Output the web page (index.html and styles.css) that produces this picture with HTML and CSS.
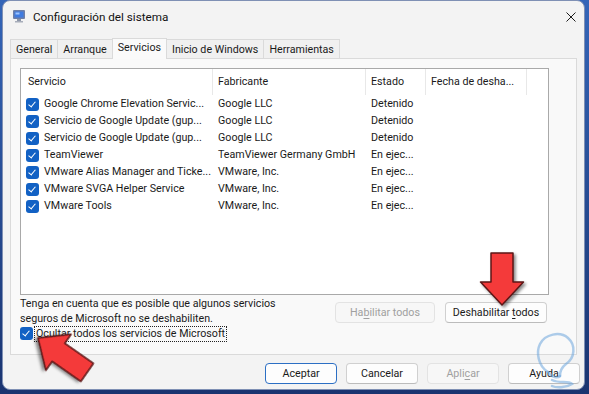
FILE: index.html
```html
<!DOCTYPE html>
<html lang="es">
<head>
  <meta charset="UTF-8">
  <title>Configuración del sistema</title>
  <link rel="stylesheet" href="styles.css">
</head>
<body>

  <div class="window">
    <!-- Title bar -->
    <div class="titlebar">
      <svg class="app-icon" width="14" height="14" viewBox="0 0 14 14">
        <rect x="1" y="1" width="12" height="9" rx="1" fill="#6d7fa8"/>
        <rect x="2.5" y="2.5" width="9" height="6" fill="#3f7be0"/>
        <rect x="3.5" y="3.5" width="4" height="2" fill="#9cc4ff"/>
        <rect x="5" y="10" width="4" height="2" fill="#8d96a8"/>
        <rect x="3" y="12" width="8" height="1.5" fill="#a7adba"/>
      </svg>
      <span class="title">Configuración del sistema</span>
      <svg class="close" width="10" height="10" viewBox="0 0 10 10">
        <path d="M0.5 0.5 L9.5 9.5 M9.5 0.5 L0.5 9.5" stroke="#1b1b1b" stroke-width="1"/>
      </svg>
    </div>

    <!-- Tabs -->
    <div class="tabs">
      <div class="tab">General</div>
      <div class="tab">Arranque</div>
      <div class="tab selected">Servicios</div>
      <div class="tab">Inicio de Windows</div>
      <div class="tab">Herramientas</div>
    </div>

    <div class="panel">
      <!-- Services list -->
      <div class="list">
        <div class="list-head">
          <div class="col">Servicio</div>
          <div class="col">Fabricante</div>
          <div class="col">Estado</div>
          <div class="col">Fecha de desha...</div>
          <div class="col last"></div>
        </div>

        <div class="row">
          <div class="cell name"><span class="check"></span>Google Chrome Elevation Servic...</div>
          <div class="cell">Google LLC</div>
          <div class="cell">Detenido</div>
        </div>
        <div class="row">
          <div class="cell name"><span class="check"></span>Servicio de Google Update (gup...</div>
          <div class="cell">Google LLC</div>
          <div class="cell">Detenido</div>
        </div>
        <div class="row">
          <div class="cell name"><span class="check"></span>Servicio de Google Update (gup...</div>
          <div class="cell">Google LLC</div>
          <div class="cell">Detenido</div>
        </div>
        <div class="row">
          <div class="cell name"><span class="check"></span>TeamViewer</div>
          <div class="cell">TeamViewer Germany GmbH</div>
          <div class="cell">En ejec...</div>
        </div>
        <div class="row">
          <div class="cell name"><span class="check"></span>VMware Alias Manager and Ticke...</div>
          <div class="cell">VMware, Inc.</div>
          <div class="cell">En ejec...</div>
        </div>
        <div class="row">
          <div class="cell name"><span class="check"></span>VMware SVGA Helper Service</div>
          <div class="cell">VMware, Inc.</div>
          <div class="cell">En ejec...</div>
        </div>
        <div class="row">
          <div class="cell name"><span class="check"></span>VMware Tools</div>
          <div class="cell">VMware, Inc.</div>
          <div class="cell">En ejec...</div>
        </div>
      </div>

      <!-- Note and list buttons -->
      <div class="list-footer">
        <p class="note">Tenga en cuenta que es posible que algunos servicios<br>seguros de Microsoft no se deshabiliten.</p>
        <div class="list-buttons">
          <button class="btn disabled wide">Ha<u>b</u>ilitar todos</button>
          <button class="btn wide2">Deshabilitar <u>t</u>odos</button>
        </div>
      </div>

      <div class="hide-ms">
        <span class="check"></span>
        <span class="focus">Ocultar todos los servicios de Microsoft</span>
      </div>
    </div>

    <!-- Dialog buttons -->
    <div class="dialog-buttons">
      <button class="btn default">Aceptar</button>
      <button class="btn">Cancelar</button>
      <button class="btn disabled">Apli<u>c</u>ar</button>
      <button class="btn">Ayuda</button>
    </div>
  </div>

  <!-- Red arrows and watermark drawn over the dialog -->
  <svg class="overlay" width="589" height="394" viewBox="0 0 589 394">
    <g class="arrow">
      <polygon transform="translate(502,305)" points="-11,-52 11,-52 11,-23 21.5,-23 0,0 -21.5,-23 -11,-23"/>
      <polygon transform="translate(38,338) rotate(125)" points="-11,-60 11,-60 11,-25 22,-25 0,0 -22,-25 -11,-25"/>
    </g>
    <g class="watermark">
      <path d="M548 372 C538 366 536 352 540 344 C545 334 560 331 568 338 C576 345 575 358 566 364 C562 367 560 371 560 376"/>
      <path d="M548 372 C552 378 558 378 560 376 M552 380 C560 384 568 380 572 384 C566 388 556 388 552 386"/>
    </g>
  </svg>

</body>
</html>
```

FILE: styles.css
```css
* {
  margin: 0;
  padding: 0;
  box-sizing: border-box;
}

body {
  width: 589px;
  height: 394px;
  overflow: hidden;
  background: linear-gradient(180deg, #3465b8, #1a3470);
  font-family: Roboto, "Liberation Sans", sans-serif;
  font-size: 10.7px;
  color: #1a1a1a;
  position: relative;
}

.window {
  margin-left: 2px;
  width: 583px;
  height: 390px;
  background: #f3f3f3;
  border-radius: 8px;
  border: 1px solid #7f90b4;
  overflow: hidden;
}

/* Title bar */
.titlebar {
  height: 31px;
  display: flex;
  align-items: center;
  padding-left: 9px;
}

.app-icon {
  margin-top: -1px;
}

.title {
  margin-left: 7px;
  font-size: 11.7px;
  color: #111;
}

.close {
  margin-left: auto;
  margin-right: 8px;
}

/* Tabs */
.tabs {
  display: flex;
  align-items: flex-end;
  height: 26px;
  margin-left: 7px;
  padding-top: 6px;
}

.tab {
  height: 19px;
  line-height: 19px;
  padding: 0 5px;
  border: 1px solid #dadada;
  border-bottom: none;
  border-right: none;
  background: #f0f0f0;
  color: #1a1a1a;
}

.tab:nth-child(5) {
  border-right: 1px solid #dadada;
}

.tab.selected {
  height: 21px;
  line-height: 18px;
  background: #fafafa;
  margin-bottom: -1px;
  position: relative;
  z-index: 1;
  border-right: 1px solid #dadada;
}

.tab.selected + .tab {
  border-left: none;
}

/* Panel */
.panel {
  margin: 0 7px;
  height: 297px;
  border: 1px solid #dadada;
  background: #f9f9f9;
  padding: 9px 27px 0 9px;
}

.list {
  height: 227px;
  border: 1px solid #a9a9a9;
  background: #fff;
}

.list-head,
.row {
  display: grid;
  grid-template-columns: 192px 153px 60px 101px 1fr;
}

.list-head {
  height: 26px;
}

.col {
  line-height: 26px;
  padding-left: 7px;
  border-right: 1px solid #e8e8e8;
}

.col:nth-child(2),
.col:nth-child(3),
.col:nth-child(4) {
  padding-left: 5px;
}

.col.last {
  border-right: none;
}

.row {
  height: 17px;
  line-height: 18px;
}

.cell {
  padding-left: 5px;
  white-space: nowrap;
}

.cell.name {
  display: flex;
  align-items: center;
  padding-left: 5px;
}

.check {
  display: inline-block;
  flex-shrink: 0;
  width: 13px;
  height: 13px;
  border-radius: 3px;
  background: #1261c4;
  margin-right: 5px;
  position: relative;
}

.check::after {
  content: "";
  position: absolute;
  left: 4px;
  top: 2px;
  width: 3px;
  height: 6px;
  border-right: 1.3px solid #fff;
  border-bottom: 1.3px solid #fff;
  transform: rotate(40deg);
}

/* Under the list */
.list-footer {
  display: flex;
  justify-content: space-between;
  padding-right: 2px;
}

.note {
  margin-top: 1px;
  line-height: 15px;
}

.list-buttons {
  display: flex;
  gap: 10px;
  margin-top: 7px;
}

.btn {
  font-family: Roboto, "Liberation Sans", sans-serif;
  font-size: 10.7px;
  color: #1a1a1a;
  height: 21px;
  width: 72px;
  background: #fdfdfd;
  border: 1px solid #d0d0d0;
  border-bottom-color: #bcbcbc;
  border-radius: 4px;
}

.btn u {
  text-underline-offset: 2px;
}

.btn.wide {
  width: 100px;
}

.btn.wide2 {
  width: 102px;
}

.btn.disabled {
  color: #a0a0a0;
  background: #f7f7f7;
  border-color: #e3e3e3;
}

.btn.default {
  border: 1px solid #2c6fc4;
}

.hide-ms {
  display: flex;
  align-items: center;
  height: 15px;
}

.hide-ms .check {
  margin-right: 2px;
}

.focus {
  outline: 1px dotted #222;
  line-height: 14px;
  padding: 0 1px;
}

/* Dialog buttons */
.dialog-buttons {
  display: flex;
  justify-content: flex-end;
  gap: 9px;
  margin-top: 8px;
  padding-right: 4px;
}

/* Overlay */
.overlay {
  position: absolute;
  left: 0;
  top: 0;
  pointer-events: none;
}

.arrow polygon {
  fill: #f43a3a;
  stroke: #5c1616;
  stroke-width: 1.5;
  stroke-linejoin: round;
  filter: drop-shadow(2px 2px 1.5px rgba(0, 0, 0, 0.45));
}

.watermark path {
  fill: none;
  stroke: #6ea6dc;
  stroke-width: 2.5;
  stroke-linecap: round;
  opacity: 0.55;
}
```
